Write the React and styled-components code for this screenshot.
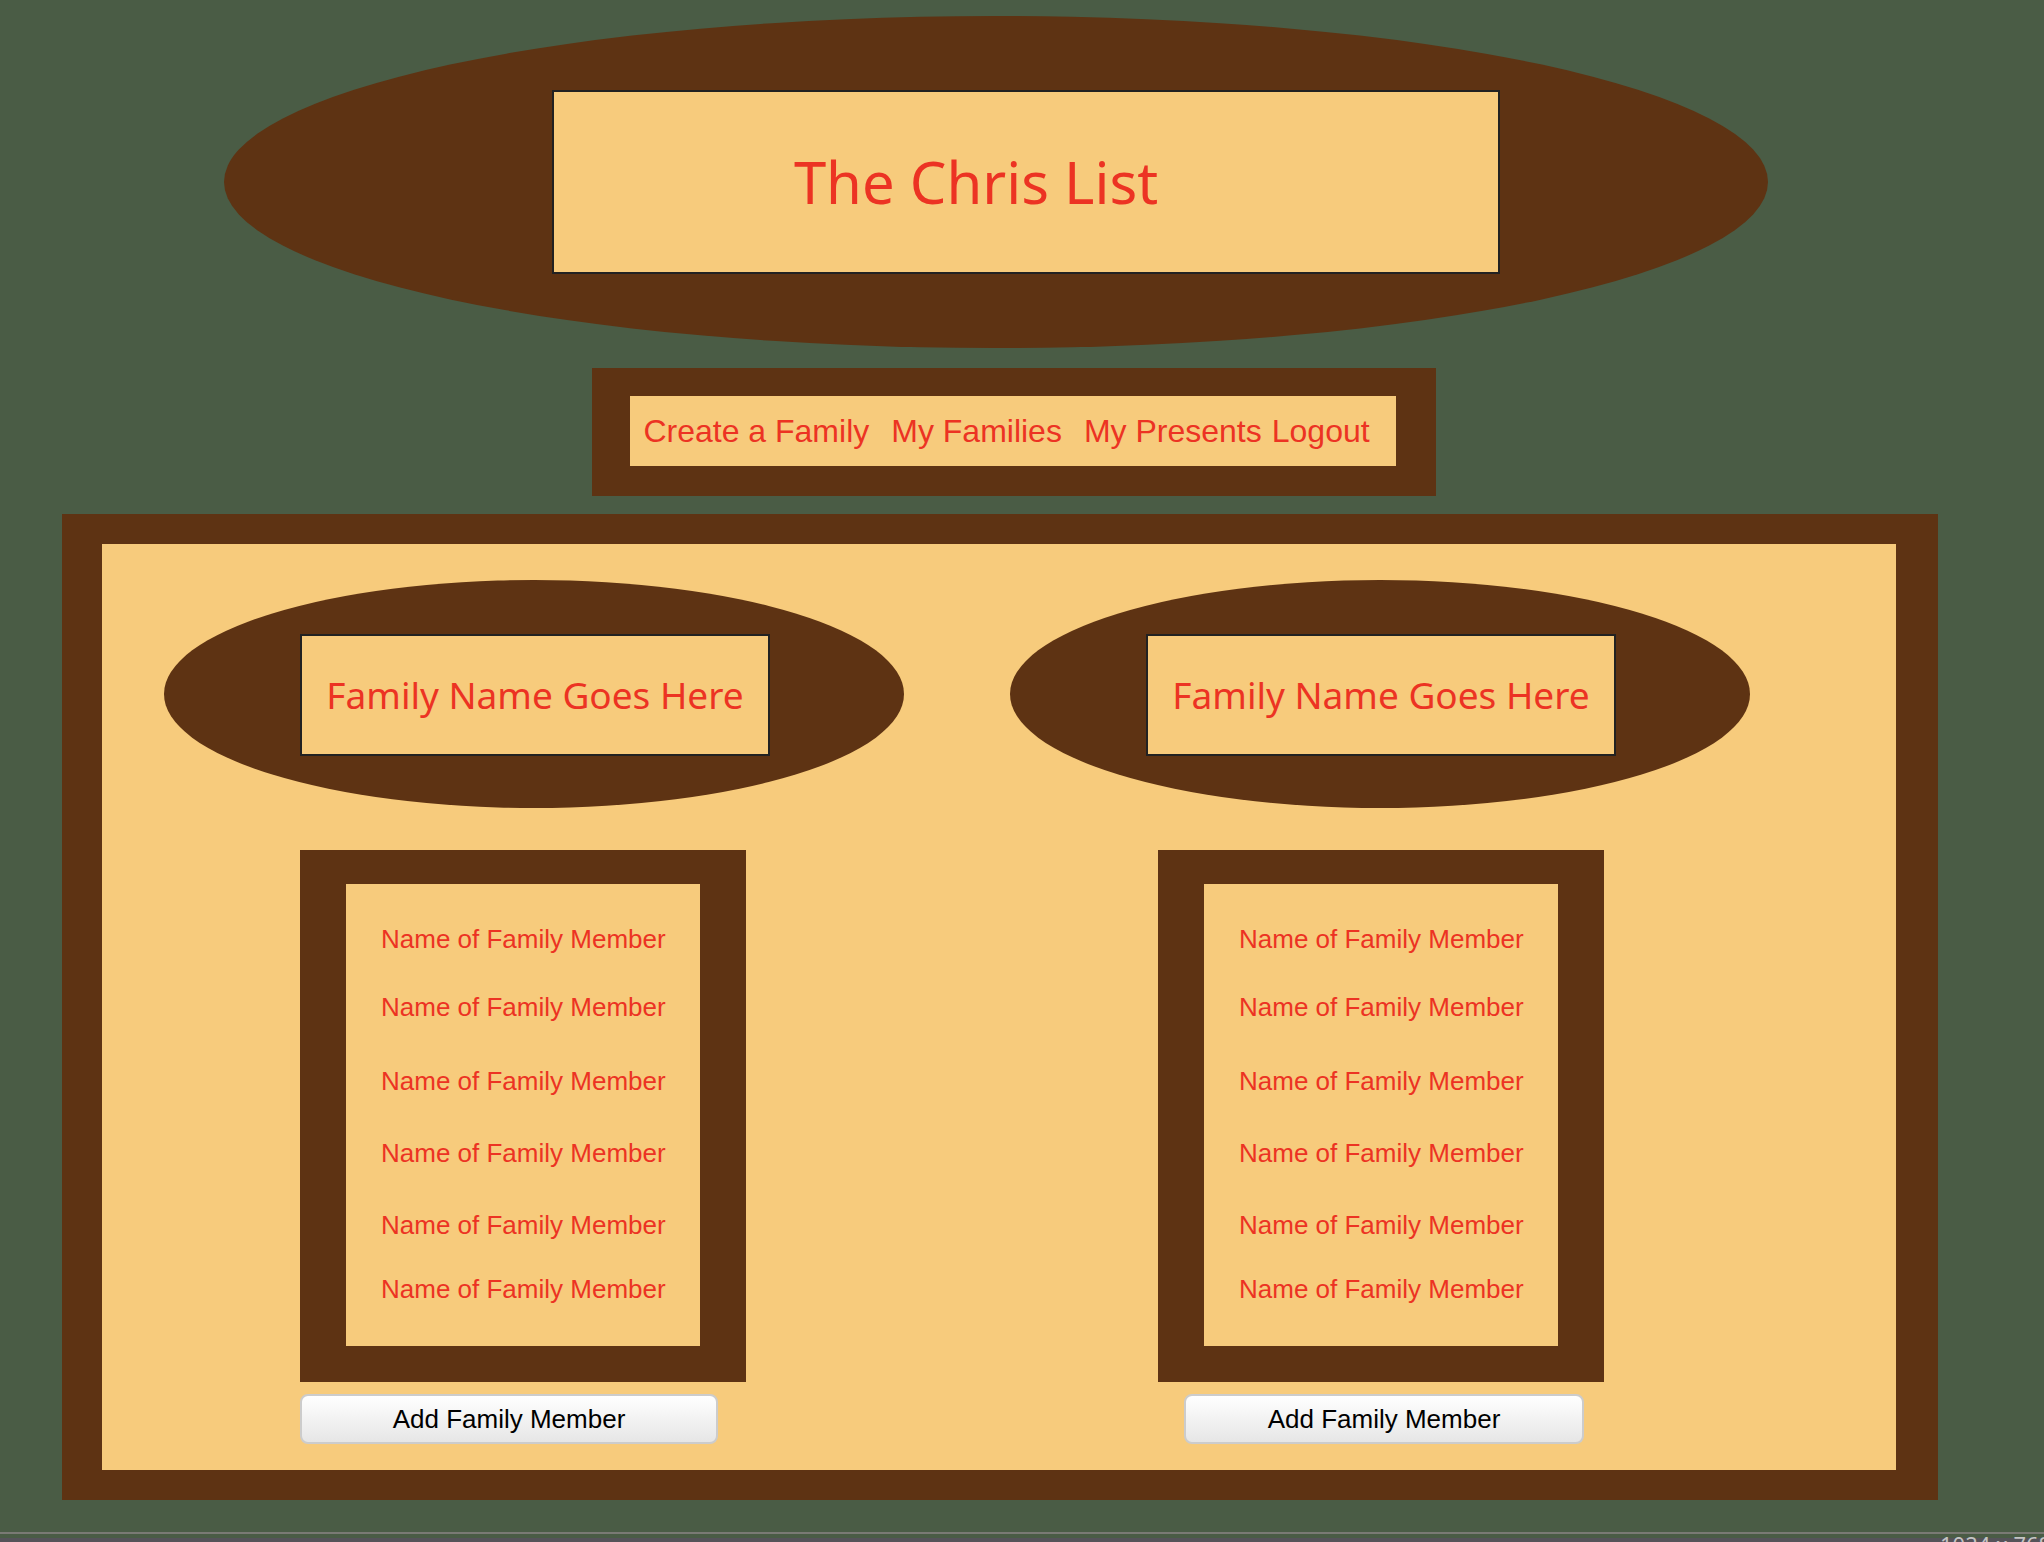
import React from "react";
import styled, { createGlobalStyle, ThemeProvider } from "styled-components";

const theme = {
  green: "#4a5c45",
  brown: "#5e3313",
  tan: "#f7cb7c",
  red: "#ec3323",
  ink: "#222222",
  sans: '"Liberation Sans", Arial, sans-serif',
  display: '"Noto Sans", "Open Sans", sans-serif',
};

const GlobalStyle = createGlobalStyle`
  *, *::before, *::after { box-sizing: border-box; }
  body {
    margin: 0;
    background: ${theme.green};
    color: ${theme.red};
    font-family: ${theme.sans};
  }
`;

const Page = styled.div`
  display: flex;
  flex-direction: column;
`;

const Content = styled.div`
  display: flex;
  flex-direction: column;
  padding: 16px 106px 32px 62px;
`;

const Oval = styled.header`
  display: flex;
  background: ${({ theme }) => theme.brown};
  border-radius: 50%;
`;

const SiteHeader = styled(Oval)`
  margin: 0 170px 20px 162px;
  padding: 74px 268px 74px 328px;
`;

const FamilyHeader = styled(Oval)`
  padding: 54px 134px 52px 136px;
`;

const Plaque = styled.div`
  flex: 1;
  display: flex;
  justify-content: center;
  align-items: center;
  background: ${({ theme }) => theme.tan};
  border: 2px solid ${({ theme }) => theme.ink};
  font-family: ${({ theme }) => theme.display};
  white-space: nowrap;
`;

const SitePlaque = styled(Plaque)`
  height: 184px;
  padding-right: 100px;
`;

const FamilyPlaque = styled(Plaque)`
  height: 122px;
`;

const SiteTitle = styled.h1`
  margin: 0;
  font-size: 58px;
  line-height: 80px;
  font-weight: 400;
`;

const FamilyTitle = styled.h2`
  margin: 0;
  font-size: 37px;
  line-height: 52px;
  font-weight: 400;
`;

const NavFrame = styled.nav`
  align-self: center;
  margin: 0 0 18px 28px;
  border: solid ${({ theme }) => theme.brown};
  border-width: 28px 40px 30px 38px;
`;

const NavBar = styled.div`
  display: flex;
  align-items: center;
  gap: 22px;
  height: 70px;
  padding: 0 26px 0 13px;
  background: ${({ theme }) => theme.tan};
`;

const NavPair = styled.div`
  display: flex;
  gap: 10px;
`;

const NavLink = styled.a`
  color: ${({ theme }) => theme.red};
  font-size: 32px;
  line-height: 36px;
  text-decoration: none;
  white-space: nowrap;
`;

const Board = styled.main`
  display: grid;
  grid-template-columns: 1fr 1fr;
  column-gap: 106px;
  padding: 36px 146px 26px 62px;
  background: ${({ theme }) => theme.tan};
  border: solid ${({ theme }) => theme.brown};
  border-width: 30px 42px 30px 40px;
`;

const Family = styled.section`
  display: flex;
  flex-direction: column;
  align-items: stretch;
`;

const MemberList = styled.ul`
  align-self: flex-start;
  width: 446px;
  margin: 42px 0 12px ${({ $indent }) => $indent}px;
  padding: 39px 0 41px 35px;
  list-style: none;
  background: ${({ theme }) => theme.tan};
  border: solid ${({ theme }) => theme.brown};
  border-width: 34px 46px 36px;
`;

const gaps = { none: 0, tight: 32, regular: 36, loose: 40, wide: 42 };

const Member = styled.li`
  padding-bottom: ${({ $gap }) => gaps[$gap]}px;
  font-size: 26px;
  line-height: 32px;
  white-space: nowrap;
`;

const AddButton = styled.button`
  align-self: flex-start;
  width: ${({ $width }) => $width}px;
  height: 50px;
  margin: 0 0 0 ${({ $indent }) => $indent}px;
  padding: 0;
  border: 2px solid #cccccc;
  border-radius: 8px;
  background: linear-gradient(#ffffff, #e6e6e6);
  color: #000000;
  font-family: inherit;
  font-size: 26px;
  line-height: 32px;
`;

const StatusBar = styled.footer`
  display: flex;
  justify-content: flex-end;
  height: 10px;
  overflow: hidden;
  border-top: 2px solid #7a7a74;
  background: linear-gradient(${({ theme }) => theme.green} 4px, #555359 4px);
  color: #c4c4c4;
  font-family: ${({ theme }) => theme.display};
  font-size: 22px;
  line-height: 20px;
`;

const CanvasSize = styled.span`
  flex: none;
  width: 104px;
  white-space: nowrap;
`;

const memberGaps = ["regular", "wide", "loose", "loose", "tight", "none"];
const members = memberGaps.map((gap) => ({
  name: "Name of Family Member",
  gap,
}));

const families = [
  { id: 1, name: "Family Name Goes Here", listIndent: 136, buttonIndent: 136, buttonWidth: 418 },
  { id: 2, name: "Family Name Goes Here", listIndent: 148, buttonIndent: 174, buttonWidth: 400 },
];

export default function App() {
  return (
    <ThemeProvider theme={theme}>
      <GlobalStyle />
      <Page>
        <Content>
          <SiteHeader>
            <SitePlaque>
              <SiteTitle>The Chris List</SiteTitle>
            </SitePlaque>
          </SiteHeader>
          <NavFrame>
            <NavBar>
              <NavLink href="#create">Create a Family</NavLink>
              <NavLink href="#families">My Families</NavLink>
              <NavPair>
                <NavLink href="#presents">My Presents</NavLink>
                <NavLink href="#logout">Logout</NavLink>
              </NavPair>
            </NavBar>
          </NavFrame>
          <Board>
            {families.map((family) => (
              <Family key={family.id}>
                <FamilyHeader>
                  <FamilyPlaque>
                    <FamilyTitle>{family.name}</FamilyTitle>
                  </FamilyPlaque>
                </FamilyHeader>
                <MemberList $indent={family.listIndent}>
                  {members.map((member, i) => (
                    <Member key={i} $gap={member.gap}>
                      {member.name}
                    </Member>
                  ))}
                </MemberList>
                <AddButton type="button" $indent={family.buttonIndent} $width={family.buttonWidth}>
                  Add Family Member
                </AddButton>
              </Family>
            ))}
          </Board>
        </Content>
        <StatusBar>
          <CanvasSize>1024 x 768</CanvasSize>
        </StatusBar>
      </Page>
    </ThemeProvider>
  );
}
